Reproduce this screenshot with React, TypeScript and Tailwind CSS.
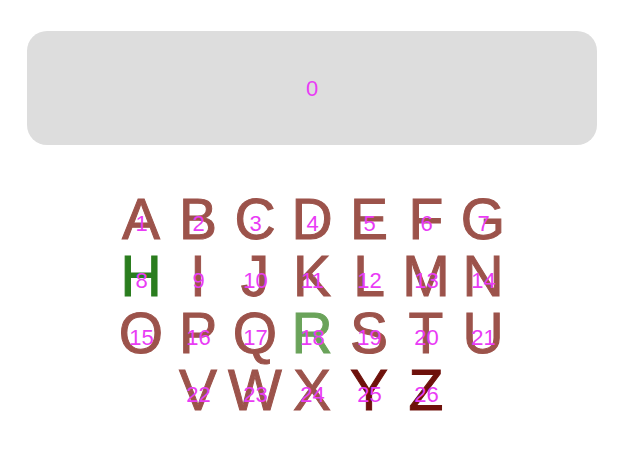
import React from "react";

const letters = "ABCDEFGHIJKLMNOPQRSTUVWXYZ".split("");

function colorFor(l: string) {
  if (l === "H") return "text-[#2a7d1e]";
  if (l === "R") return "text-[#6aa35a]";
  if (l === "Y" || l === "Z") return "text-[#6e110b]";
  return "text-[#9c534b]";
}

export default function App() {
  const rows = [letters.slice(0, 7), letters.slice(7, 14), letters.slice(14, 21), letters.slice(21)];
  let idx = 0;
  return (
    <div className="w-[620px] h-[452px] bg-white pt-[31px] pl-[27px] font-['Liberation_Sans',Arial,sans-serif]">
      <div className="w-[570px]">
        <div className="h-[114px] rounded-[20px] bg-[#dddddd] flex items-center justify-center pt-[2px]">
          <span className="text-[22px] leading-none text-[#e93cf5]">0</span>
        </div>
        <div className="mt-[46px] flex flex-col items-center">
          {rows.map((row, ri) => (
            <div key={ri} className="flex">
              {row.map((l) => {
                idx += 1;
                return (
                  <div key={l} className="relative w-[57px] h-[57px] flex items-center justify-center">
                    <span className={`text-[57px] leading-none [-webkit-text-stroke-width:1px] ${colorFor(l)}`}>{l}</span>
                    <span className="absolute inset-0 flex items-center justify-center pt-[8px] pl-[1px] text-[22px] leading-none text-[#e93cf5]">
                      {idx}
                    </span>
                  </div>
                );
              })}
            </div>
          ))}
        </div>
      </div>
    </div>
  );
}
